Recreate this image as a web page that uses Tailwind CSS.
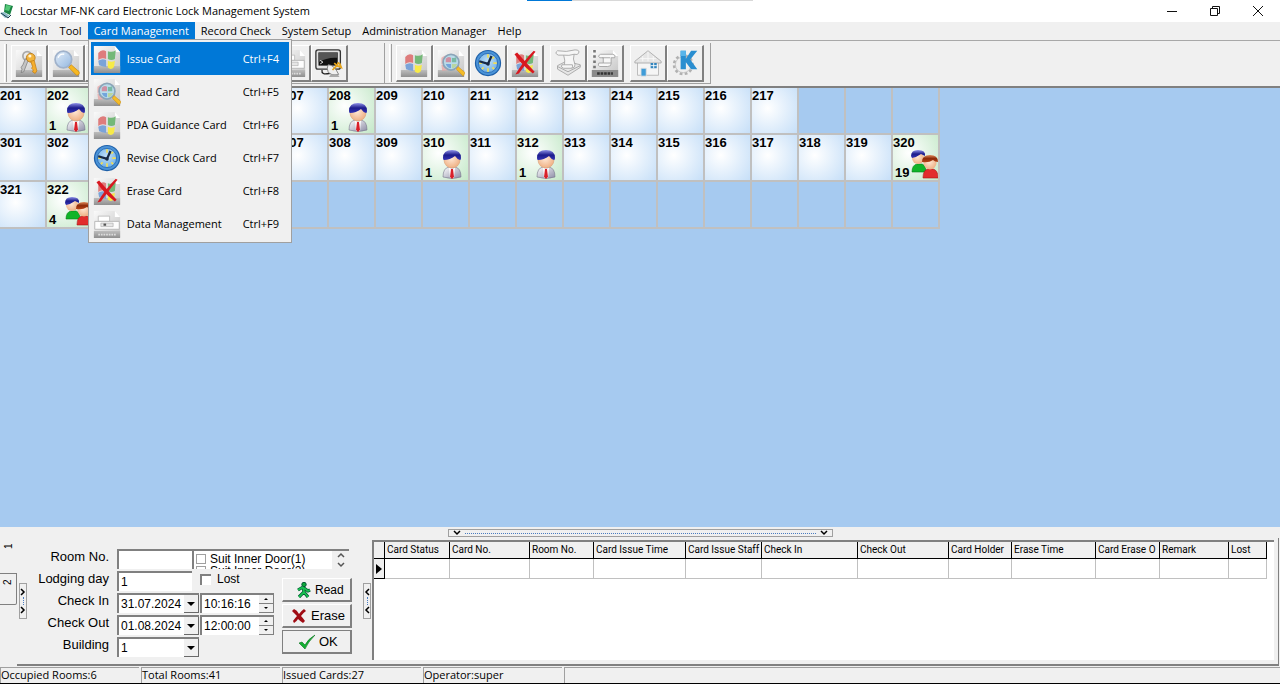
<!DOCTYPE html>
<html lang="en">
<head>
<meta charset="UTF-8">
<meta name="viewport" content="width=device-width, initial-scale=1.0">
<title>Locstar MF-NK card Electronic Lock Management System</title>
<script src="https://cdn.jsdelivr.net/npm/@tailwindcss/browser@4"></script>
</head>
<body class="h-screen flex flex-col overflow-hidden bg-[#f0f0f0] text-black font-['Open_Sans',sans-serif] text-[11px] leading-4">

<!-- icon sprite -->
<svg class="absolute w-0 h-0" aria-hidden="true">
    <defs>
        <linearGradient id="gPage" x1="0" y1="0" x2="1" y2="1"><stop offset="0" stop-color="#fafafa"/><stop offset="1" stop-color="#c4c4c4"/></linearGradient>
        <linearGradient id="gStrip" x1="0" y1="0" x2="0" y2="1"><stop offset="0" stop-color="#bdbdbd"/><stop offset="1" stop-color="#8f8f8f"/></linearGradient>
        <linearGradient id="gHair" x1="0" y1="0" x2="0" y2="1"><stop offset="0" stop-color="#8f92e8"/><stop offset=".5" stop-color="#1c1c8c"/><stop offset="1" stop-color="#3434b4"/></linearGradient>
        <linearGradient id="gHairRed" x1="0" y1="0" x2="0" y2="1"><stop offset="0" stop-color="#e08a5a"/><stop offset=".5" stop-color="#8e2a08"/><stop offset="1" stop-color="#b84418"/></linearGradient>
        <radialGradient id="gFace" cx=".45" cy=".4" r=".6"><stop offset="0" stop-color="#ffe9d6"/><stop offset="1" stop-color="#efb084"/></radialGradient>
        <linearGradient id="gSuit" x1="0" y1="0" x2="1" y2="1"><stop offset="0" stop-color="#ffffff"/><stop offset="1" stop-color="#8d8da6"/></linearGradient>
        <radialGradient id="gDial" cx=".5" cy=".4" r=".6"><stop offset="0" stop-color="#c4e2fa"/><stop offset="1" stop-color="#6fb0e6"/></radialGradient>
        <linearGradient id="gLens" x1="0" y1="0" x2="1" y2="1"><stop offset="0" stop-color="#e3edf8"/><stop offset="1" stop-color="#93b7e0"/></linearGradient>
    </defs>
    <symbol id="page" viewBox="0 0 32 32">
        <path d="M1 1h24l6 7v23H1z" fill="url(#gPage)"/>
        <path d="M25 1v7h6z" fill="#fff"/>
        <path d="M1 24h30v8H1z" fill="url(#gStrip)"/>
    </symbol>
    <symbol id="flag" viewBox="0 0 32 32">
        <use href="#page"/>
        <path d="M6 9q4-5 9-2v9q-5-2-9 1z" fill="#de7c7c"/>
        <path d="M17 7q5 2 9-1l-1 10q-4 2-8 0z" fill="#74b878"/>
        <path d="M6 18q4-3 9-1v8q-5-1-8-2z" fill="#7ba3d8"/>
        <path d="M17 18q4 2 8 0l-1 7q-3 4-7 1z" fill="#f7ea48"/>
    </symbol>
    <symbol id="flag-search" viewBox="0 0 32 32">
        <use href="#page"/>
        <path d="M5 10q5-4 9-2l-1 7-8 2zM5 18l8-1v7l-7 1z" fill="#e6a0a0" opacity=".7"/>
        <circle cx="16" cy="15" r="9" fill="#b9dcea" stroke="#8ba4b8" stroke-width="2"/>
        <path d="M10 11q3-3 6-1v5h-6z" fill="#cf8fa2"/><path d="M17 10q3 1 5-1v6h-5z" fill="#79b9a5"/><path d="M10 17h6v5q-4 0-6-5z" fill="#73a5dc"/><path d="M17 17h6q-2 5-6 5z" fill="#b9d6a0"/>
        <path d="M22 23l2-3 8 7-2 4z" fill="#f4bc28" stroke="#c98c14" stroke-width=".6"/>
    </symbol>
    <symbol id="clock" viewBox="0 0 32 32">
        <circle cx="16" cy="16" r="15" fill="#1d5fa8"/>
        <circle cx="16" cy="16" r="13.6" fill="#4a93d8"/>
        <circle cx="16" cy="16" r="11" fill="url(#gDial)" stroke="#2a6cb4"/>
        <path d="M16 6v4M16 22v4M22 16h4M6 16h3M23 9l-2 2M9 23l2-2M23 23l-2-2" stroke="#f0dc58" stroke-width="2"/>
        <path d="M6 14l10 3 4-9" fill="none" stroke="#172a45" stroke-width="2.6"/>
        <circle cx="16" cy="17" r="2" fill="#172a45"/>
    </symbol>
    <symbol id="erase" viewBox="0 0 32 32">
        <use href="#flag"/>
        <path d="M4 6l3-2q7 8 20 22l-2 2Q13 19 4 6z" fill="#d81820"/>
        <path d="M26 2l2 1Q18 15 9 28l-4 1Q14 14 26 2z" fill="#d81820"/>
    </symbol>
    <symbol id="data" viewBox="0 0 32 32">
        <use href="#page"/>
        <path d="M6 7h13v6H6z" fill="#fff" stroke="#bbb"/>
        <path d="M2 13h28v9H2z" fill="#fdfdfd" stroke="#b4b4b4"/>
        <path d="M9 15h14v4H9z" fill="#e6e6e6" stroke="#aaa" stroke-width=".7"/>
        <path d="M12 15.500h3v2.500h-3z" fill="#555"/>
        <path d="M6 28h20" stroke="#ddd" stroke-width="2" stroke-dasharray="2 1"/>
    </symbol>
    <symbol id="keys" viewBox="0 0 32 32">
        <use href="#page"/>
        <circle cx="14" cy="8" r="5" fill="none" stroke="#a9a9a9" stroke-width="2"/>
        <path d="M12 11l3 2-5 13-3 1 1-4-1-2 2-3z" fill="#c4c4c4" stroke="#777" stroke-width=".8"/>
        <circle cx="18" cy="10" r="5" fill="#f2b43c" stroke="#bc7a16"/>
        <circle cx="17" cy="8" r="1.800" fill="#fff4d8"/>
        <path d="M18 14l4-1 3 12-2 3-3-2 1-2-2-2 1-2z" fill="#f5ae2e" stroke="#bc7a16" stroke-width=".8"/>
    </symbol>
    <symbol id="search" viewBox="0 0 32 32">
        <use href="#page"/>
        <circle cx="13" cy="12" r="9.500" fill="url(#gLens)" stroke="#a0b2cb" stroke-width="2"/>
        <path d="M7 10q2-5 7-4" fill="none" stroke="#fff" stroke-width="1.500"/>
        <path d="M19 21l3-3 9 8q1 4-3 4z" fill="#f6b822" stroke="#c58614" stroke-width=".8"/>
    </symbol>
    <symbol id="monitor" viewBox="0 0 32 32">
        <rect x="1" y="1" width="28" height="22" rx="2.500" fill="#e2e2e2" stroke="#333" stroke-width="1.500"/>
        <path d="M4 4h22v15H4z" fill="#111"/><path d="M4 4h22v6Q14 9 4 15z" fill="#555"/>
        <path d="M6 13l3 2-3 2" fill="none" stroke="#fff"/>
        <path d="M8 24q-1 6 8 4l5-1" fill="none" stroke="#222" stroke-width="1.500"/>
        <path d="M15 18q7 0 12 11-9 2-12-3-2-4 0-8z" fill="#efefef" stroke="#777"/>
        <path d="M20 24l5-5M22 16l3 3 2-4M25 19l5 2-2-5" fill="none" stroke="#e6a51c" stroke-width="2"/>
        <path d="M18 29h8l2 3H16z" fill="#aaa"/>
    </symbol>
    <symbol id="scroll" viewBox="0 0 32 32">
        <path d="M4 19l10-5 16 4v3l-14 9L4 23z" fill="#e6e6e6" stroke="#a5a5a5"/>
        <path d="M4 20l12 6 14-7" fill="none" stroke="#a5a5a5"/>
        <path d="M4 2q10 2 20-1 6 0 4 4-1 2-5 1-2 5 1 12 0 4-4 4H11q-4-1-2-4h3q1-5-1-11H5Q0 5 4 2z" fill="#f6f6f6" stroke="#a5a5a5"/>
        <path d="M12 18h9q1 3-1 4M11 7q6 1 12-1" fill="none" stroke="#a5a5a5"/>
    </symbol>
    <symbol id="assets" viewBox="0 0 32 32">
        <use href="#page"/>
        <path d="M4 1v22" stroke="#777" stroke-width="3" stroke-dasharray="3 3"/>
        <path d="M11 6h14q4 1 2 4h-4v7q0 3-4 3h-9q-3-1-1-4h5V10h-4q-3-2 1-4z" fill="#f8f8f8" stroke="#a0a0a0"/>
        <path d="M13 10h9M14 16h9" stroke="#a0a0a0"/>
        <path d="M1 24h30v8H1z" fill="#8b8b8b"/>
        <path d="M7 28h18" stroke="#333" stroke-width="3" stroke-dasharray="3 1"/>
    </symbol>
    <symbol id="house" viewBox="0 0 32 32">
        <path d="M4 14h24v16H4z" fill="#f5f5f5" stroke="#b5b5b5"/>
        <path d="M16 2L1 14v2h30v-2z" fill="#e5e5e5" stroke="#a9a9a9"/>
        <path d="M16 3v11M10 8v6M22 8v6M7 11h18" stroke="#fafafa"/>
        <path d="M8 22h6v9H8z" fill="#3f9cd8" stroke="#e0e0e0"/>
        <path d="M19 16h7v6h-7z" fill="#3385bd"/><path d="M22.500 16v6M19 19h7" stroke="#fff"/>
    </symbol>
    <symbol id="kgear" viewBox="0 0 32 32">
        <circle cx="14" cy="18" r="10" fill="#e9e9e9" stroke="#b0b0b0" stroke-width="4" stroke-dasharray="3 2.500"/>
        <circle cx="14" cy="18" r="9" fill="#efefef" stroke="#c5c5c5"/>
        <path d="M11 2h6v9l6-9h7l-8 10 8 11h-7l-6-8v8h-6z" fill="#2a8ed0"/>
        <path d="M11 2h6v6h-6z" fill="#58b4ea"/>
    </symbol>
    <symbol id="guest" viewBox="0 0 20 30">
        <path d="M1 28q0-9 6-10h6q6 1 6 10-9 3-18 0z" fill="url(#gSuit)" stroke="#77778c" stroke-width=".6"/>
        <path d="M7 18l3 3 3-3-1 11H8z" fill="#fff"/>
        <path d="M9 20h2l1 8-2 2-2-2z" fill="#d8202a"/>
        <ellipse cx="10" cy="11" rx="8" ry="8" fill="url(#gFace)" stroke="#d79a70" stroke-width=".5"/>
        <path d="M1 9Q1 1 10 1t9 8q0 2-1 2Q15 10 13 7 8 11 2 11q-1 0-1-2z" fill="url(#gHair)"/>
    </symbol>
    <symbol id="couple" viewBox="0 0 28 30">
        <path d="M2 23q0-7 5-8h5q4 1 4 8z" fill="#10b428" stroke="#08801a" stroke-width=".6"/>
        <circle cx="8" cy="9" r="6" fill="url(#gFace)"/>
        <path d="M1 7q0-6 7-6 8 0 7 6l-4-2Q7 8 2 9z" fill="url(#gHair)"/>
        <path d="M13 29q0-8 5-9h5q5 1 5 9z" fill="#e22c2c" stroke="#a81414" stroke-width=".6"/>
        <circle cx="20" cy="14" r="6.500" fill="url(#gFace)"/>
        <path d="M12 13q0-7 8-7t8 7q-3 0-5-2-4 3-11 2z" fill="url(#gHairRed)"/>
    </symbol>
</svg>

<!-- title bar -->
<header class="relative flex items-center h-[22px] shrink-0 bg-white">
    <div class="absolute top-0 left-[527px] w-[45px] h-px bg-[#0078d7]"></div>
    <div class="absolute top-0 left-[572px] w-[181px] h-px bg-[#d8d8d8]"></div>
    <svg class="w-3.5 h-4 mr-1.5" viewBox="0 0 14 16"><path d="M5 1l8 2-3 9-6-3z" fill="#1a8444"/><path d="M6 2l5 1-2 5-4-1z" fill="#54c878"/><path d="M0 10l4-1 6 4-5 2z" fill="#8fbcc8"/><path d="M1 10l7 5 3-3" fill="none" stroke="#1b3c50"/></svg>
    <h1 class="flex-1 text-[11px]">Locstar MF-NK card Electronic Lock Management System</h1>
    <button class="w-[42px] h-5 grid place-items-center" aria-label="Minimize"><svg class="w-2.5 h-2.5" viewBox="0 0 10 10" stroke="#111"><path d="M0 5.500h10"/></svg></button>
    <button class="w-[43px] h-5 grid place-items-center" aria-label="Restore"><svg class="w-2.5 h-2.5" viewBox="0 0 10 10" fill="none" stroke="#111"><path d="M.5 2.500h7v7h-7zM2.500 2.500v-2h7v7h-2"/></svg></button>
    <button class="w-[44px] h-5 grid place-items-center" aria-label="Close"><svg class="w-2.5 h-2.5" viewBox="0 0 10 10" stroke="#111"><path d="M0 0l10 10M10 0L0 10"/></svg></button>
</header>

<!-- menu bar -->
<nav class="flex h-[19px] shrink-0 border-b border-[#a8a8a8]">
    <button class="pl-1 pr-1.5">Check In</button>
    <button class="px-1.5">Tool</button>
    <div class="relative">
        <button class="h-[18px] px-1.5 bg-[#0078d7] text-white">Card Management</button>
        <div class="absolute z-10 left-0 top-[17px] w-[204px] p-0.5 bg-[#f0f0f0] border border-[#a0a0a0]" role="menu">
            <button role="menuitem" class="flex items-center w-full h-[33px] pl-0.5 pr-2 bg-[#0078d7] text-white"><svg class="w-7 h-7 mr-1.5"><use href="#flag"/></svg>Issue Card<span class="ml-auto w-[38px] text-left">Ctrl+F4</span></button>
            <button role="menuitem" class="flex items-center w-full h-[33px] pl-0.5 pr-2"><svg class="w-7 h-7 mr-1.5"><use href="#flag-search"/></svg>Read Card<span class="ml-auto w-[38px] text-left">Ctrl+F5</span></button>
            <button role="menuitem" class="flex items-center w-full h-[33px] pl-0.5 pr-2"><svg class="w-7 h-7 mr-1.5"><use href="#flag"/></svg>PDA Guidance Card<span class="ml-auto w-[38px] text-left">Ctrl+F6</span></button>
            <button role="menuitem" class="flex items-center w-full h-[33px] pl-0.5 pr-2"><svg class="w-7 h-7 mr-1.5"><use href="#clock"/></svg>Revise Clock Card<span class="ml-auto w-[38px] text-left">Ctrl+F7</span></button>
            <button role="menuitem" class="flex items-center w-full h-[33px] pl-0.5 pr-2"><svg class="w-7 h-7 mr-1.5"><use href="#erase"/></svg>Erase Card<span class="ml-auto w-[38px] text-left">Ctrl+F8</span></button>
            <button role="menuitem" class="flex items-center w-full h-[33px] pl-0.5 pr-2"><svg class="w-7 h-7 mr-1.5"><use href="#data"/></svg>Data Management<span class="ml-auto w-[38px] text-left">Ctrl+F9</span></button>
        </div>
    </div>
    <button class="pl-1.5 pr-[5px]">Record Check</button>
    <button class="pl-1.5 pr-[5px]">System Setup</button>
    <button class="pl-1.5 pr-[5px]">Administration Manager</button>
    <button class="pl-1.5 pr-[5px]">Help</button>
</nav>

<!-- toolbar, filled by the script below -->
<div class="flex h-[47px] shrink-0 pt-0.5 pb-0.5 border-b-2 border-[#808080] bg-[#f0f0f0]">
    <div class="flex items-center w-[385px] pl-1 border-r border-b border-[#a0a0a0]">
        <div class="w-[3px] h-[38px] mr-1 border-l border-r border-l-white border-r-[#a0a0a0]"></div>
        <div id="toolsLeft" class="flex"></div>
    </div>
    <div class="flex items-center w-[326px] pl-1 border-r border-b border-[#a0a0a0]">
        <div class="w-[3px] h-[38px] mr-1 border-l border-r border-l-white border-r-[#a0a0a0]"></div>
        <div id="toolsRight" class="flex"></div>
    </div>
</div>

<!-- room board -->
<main class="flex-1 min-h-0 bg-[#a6caf0] overflow-hidden">
    <div id="rooms" class="grid grid-cols-[repeat(20,47px)] auto-rows-[47px] w-max font-['Liberation_Sans',sans-serif] text-[13px] leading-[13px] font-bold"></div>
</main>

<!-- splitter -->
<div class="flex justify-center h-[11px] shrink-0 pt-0.5">
    <button class="flex items-center w-[385px] h-2 px-1 border border-[#a0a0a0]" aria-label="Collapse panel">
        <svg class="w-2 h-1.5" viewBox="0 0 8 6" fill="none" stroke="#000" stroke-width="1.500"><path d="M1 1l3 3 3-3"/></svg>
        <span class="flex-1 mx-1 border-t border-dotted border-[#4a7cc0]"></span>
        <svg class="w-2 h-1.5" viewBox="0 0 8 6" fill="none" stroke="#000" stroke-width="1.500"><path d="M1 1l3 3 3-3"/></svg>
    </button>
</div>

<!-- bottom panel -->
<section class="flex h-[128px] shrink-0 pr-px">
    <div class="flex flex-col w-[17px] items-center text-[10px] leading-4 font-['Liberation_Sans',sans-serif]">
        <button class="w-full h-[35px] flex justify-center"><span class="[writing-mode:vertical-rl] rotate-180 h-4">1</span></button>
        <button class="w-full h-8 flex justify-center border-t border-r border-b border-[#808080] rounded-br-xs"><span class="[writing-mode:vertical-rl] rotate-180 h-4">2</span></button>
    </div>
    <div class="flex flex-1 min-w-0 border-b-2 border-r border-[#808080]">
        <button class="flex flex-col items-center justify-between self-start w-2 h-9 mt-[45px] ml-0.5 py-1 shrink-0 border border-[#a0a0a0]" aria-label="Hide form">
            <svg class="w-1.5 h-2 shrink-0" viewBox="0 0 6 8" fill="none" stroke="#000" stroke-width="1.500"><path d="M1 1l3 3-3 3"/></svg>
            <span class="h-2 border-l border-dotted border-[#4a7cc0]"></span>
            <svg class="w-1.5 h-2 shrink-0" viewBox="0 0 6 8" fill="none" stroke="#000" stroke-width="1.500"><path d="M1 1l3 3-3 3"/></svg>
        </button>

        <form class="flex shrink-0 w-[342px] pl-1.5 pt-[11px] font-['Liberation_Sans',sans-serif] text-[13px] leading-4">
            <div class="grid grid-cols-[76px_75px_82px] auto-rows-[21px] gap-x-2 gap-y-px content-start text-xs">
                <label for="roomNo" class="text-right text-[13px] leading-4">Room No.</label>
                <input id="roomNo" type="text" class="h-5 w-full bg-white border-t-2 border-l-2 border-[#808080] px-0.5">
                <div class="flex w-[157px] h-5 -ml-2 overflow-hidden border-t-2 border-l-2 border-[#808080] bg-white">
                    <div class="flex-1 h-[18px] overflow-hidden">
                        <label class="flex items-center h-[14px] mt-px pl-0.5 gap-1"><input type="checkbox" class="appearance-none w-2.5 h-2.5 border border-[#a0a0a0] bg-white">Suit Inner Door(1)</label>
                        <label class="flex items-center h-2.5 pl-0.5 gap-1"><input type="checkbox" class="appearance-none w-2.5 h-2.5 border border-[#a0a0a0] bg-white">Suit Inner Door(2)</label>
                    </div>
                    <button type="button" class="w-[17px] bg-[#f0f0f0] grid place-items-center" aria-label="Scroll"><svg class="w-2 h-4" viewBox="0 0 8 16" fill="none" stroke="#555" stroke-width="1.500"><path d="M1 5l3-3 3 3M1 11l3 3 3-3"/></svg></button>
                </div>

                <label for="days" class="text-right text-[13px] leading-4">Lodging day</label>
                <input id="days" type="text" value="1" class="h-5 w-full bg-white border-t-2 border-l-2 border-[#808080] px-0.5">
                <label class="flex items-center h-4 gap-1.5"><input type="checkbox" class="appearance-none w-[11px] h-[11px] bg-white border-t-2 border-l-2 border-[#808080]">Lost</label>

                <label for="inDate" class="text-right text-[13px] leading-4">Check In</label>
                <div class="flex w-[82px] h-5 bg-white border-t-2 border-l-2 border-[#808080]">
                    <input id="inDate" type="text" value="31.07.2024" class="w-[65px] pl-0.5 min-w-0">
                    <button type="button" class="w-[15px] bg-[#f0f0f0] border-r border-b border-[#696969] grid place-items-center" aria-label="Pick check in date"><svg class="w-2 h-1" viewBox="0 0 8 4"><path d="M0 0h8L4 4z"/></svg></button>
                </div>
                <div class="flex w-[74px] h-5 bg-white border-t-2 border-l-2 border-[#808080]">
                    <input aria-label="Check in time" type="text" value="10:16:16" class="w-[57px] pl-0.5 min-w-0">
                    <div class="flex flex-col w-[15px] bg-[#f0f0f0]">
                        <button type="button" class="h-[9px] grid place-items-center border-b border-r border-[#808080]" aria-label="Later"><svg class="w-1 h-0.5" viewBox="0 0 4 2"><path d="M0 2h4L2 0z"/></svg></button>
                        <button type="button" class="h-[9px] grid place-items-center border-b border-r border-[#808080]" aria-label="Earlier"><svg class="w-1 h-0.5" viewBox="0 0 4 2"><path d="M0 0h4L2 2z"/></svg></button>
                    </div>
                </div>

                <label for="outDate" class="text-right text-[13px] leading-4">Check Out</label>
                <div class="flex w-[82px] h-5 bg-white border-t-2 border-l-2 border-[#808080]">
                    <input id="outDate" type="text" value="01.08.2024" class="w-[65px] pl-0.5 min-w-0">
                    <button type="button" class="w-[15px] bg-[#f0f0f0] border-r border-b border-[#696969] grid place-items-center" aria-label="Pick check out date"><svg class="w-2 h-1" viewBox="0 0 8 4"><path d="M0 0h8L4 4z"/></svg></button>
                </div>
                <div class="flex w-[74px] h-5 bg-white border-t-2 border-l-2 border-[#808080]">
                    <input aria-label="Check out time" type="text" value="12:00:00" class="w-[57px] pl-0.5 min-w-0">
                    <div class="flex flex-col w-[15px] bg-[#f0f0f0]">
                        <button type="button" class="h-[9px] grid place-items-center border-b border-r border-[#808080]" aria-label="Later"><svg class="w-1 h-0.5" viewBox="0 0 4 2"><path d="M0 2h4L2 0z"/></svg></button>
                        <button type="button" class="h-[9px] grid place-items-center border-b border-r border-[#808080]" aria-label="Earlier"><svg class="w-1 h-0.5" viewBox="0 0 4 2"><path d="M0 0h4L2 2z"/></svg></button>
                    </div>
                </div>

                <label for="building" class="text-right text-[13px] leading-4">Building</label>
                <div class="relative w-[82px] h-5 bg-white border-t-2 border-l-2 border-[#808080]">
                    <select id="building" class="appearance-none w-full h-full pl-0.5"><option>1</option></select>
                    <div class="absolute right-0 inset-y-0 w-[15px] bg-[#f0f0f0] border-r border-b border-[#696969] grid place-items-center pointer-events-none"><svg class="w-2 h-1" viewBox="0 0 8 4"><path d="M0 0h8L4 4z"/></svg></div>
                </div>
            </div>
            <div class="flex flex-col gap-0.5 pt-[29px]">
                <button type="button" class="flex items-center gap-1 w-[70px] h-6 pl-3 text-xs border-r-2 border-b-2 border-t border-l border-t-white border-l-white border-r-[#808080] border-b-[#808080]"><svg class="w-4 h-4" viewBox="0 0 16 16"><circle cx="9" cy="2.500" r="2.200" fill="#0ca838" stroke="#053"/><path d="M8 5L3 8M8 5l1 5-5 5M9 10l4 5M9 6l4 3 2-1" fill="none" stroke="#053" stroke-width="3.200"/><path d="M8 5L3 8M8 5l1 5-5 5M9 10l4 5M9 6l4 3 2-1" fill="none" stroke="#18c050" stroke-width="1.800"/></svg>Read</button>
                <button type="button" class="flex items-center gap-1 w-[70px] h-6 pl-2 border-r-2 border-b-2 border-t border-l border-t-white border-l-white border-r-[#808080] border-b-[#808080]"><svg class="w-4 h-4" viewBox="0 0 16 16"><path d="M3 1q3 1 5 5 2-3 5-5l2 2q-3 2-5 5 2 2 4 5l-2 2q-3-2-5-4-1 2-4 4l-1-2q2-3 4-5-3-3-5-5z" fill="#a00c14"/></svg>Erase</button>
                <button type="button" class="flex items-center gap-1 w-[70px] h-6 pl-4 border-r-2 border-b-2 border-t border-l border-[#808080]"><svg class="w-4 h-4" viewBox="0 0 16 16"><path d="M0 9l3-1 3 3q3-6 10-10Q9 8 6 15z" fill="#12b030" stroke="#08701c" stroke-width=".6"/></svg>OK</button>
            </div>
        </form>

        <button class="flex flex-col items-center justify-between self-start w-2 h-9 mt-[45px] -ml-1.5 py-1 mr-px shrink-0 border border-[#a0a0a0]" aria-label="Hide table">
            <svg class="w-1.5 h-2 shrink-0" viewBox="0 0 6 8" fill="none" stroke="#000" stroke-width="1.500"><path d="M5 1L2 4l3 3"/></svg>
            <span class="h-2 border-l border-dotted border-[#4a7cc0]"></span>
            <svg class="w-1.5 h-2 shrink-0" viewBox="0 0 6 8" fill="none" stroke="#000" stroke-width="1.500"><path d="M5 1L2 4l3 3"/></svg>
        </button>

        <div class="flex-1 min-w-0 mt-0.5 mb-1 mr-1 overflow-hidden bg-white border-t-2 border-l-2 border-[#808080]">
            <table class="table-fixed border-separate border-spacing-0 w-[893px] font-[Roboto,sans-serif] text-[10px] leading-4 whitespace-nowrap">
                <colgroup><col class="w-[11px]"><col class="w-[65px]"><col class="w-[80px]"><col class="w-[64px]"><col class="w-[92px]"><col class="w-[76px]"><col class="w-[96px]"><col class="w-[91px]"><col class="w-[63px]"><col class="w-[84px]"><col class="w-[64px]"><col class="w-[69px]"><col class="w-[38px]"></colgroup>
                <thead>
                    <tr class="h-[17px] bg-[#f0f0f0] text-left [&>th]:font-normal [&>th]:p-0 [&>th]:pl-0.5 [&>th]:overflow-hidden [&>th]:border-r [&>th]:border-b [&>th]:border-black">
                        <th></th><th>Card Status</th><th>Card No.</th><th>Room No.</th><th>Card Issue Time</th><th>Card Issue Staff</th><th>Check In</th><th>Check Out</th><th>Card Holder</th><th>Erase Time</th><th>Card Erase O</th><th>Remark</th><th>Lost</th>
                    </tr>
                </thead>
                <tbody>
                    <tr class="h-5 [&>td]:p-0 [&>td]:border-r [&>td]:border-b [&>td]:border-[#c0c0c0]">
                        <td class="bg-[#f0f0f0] border-black!"><svg class="w-1.5 h-2.5 ml-0.5" viewBox="0 0 6 10"><path d="M0 0l6 5-6 5z"/></svg></td><td></td><td></td><td></td><td></td><td></td><td></td><td></td><td></td><td></td><td></td><td></td><td></td>
                    </tr>
                </tbody>
            </table>
        </div>
    </div>
</section>

<!-- status bar -->
<footer class="flex h-[18px] shrink-0 pt-px border-b border-black gap-0.5 leading-[14px] [&>div]:border-t [&>div]:border-l [&>div]:border-[#a0a0a0]">
    <div class="w-[139px]">Occupied Rooms:6</div>
    <div class="w-[139px]">Total Rooms:41</div>
    <div class="w-[139px]">Issued Cards:27</div>
    <div class="w-[139px]">Operator:super</div>
    <div class="flex-1"></div>
</footer>

<script>
const toolsLeft = ['keys', 'search', 'page', 'page', '', 'page', 'page', 'page', 'data', 'monitor'];
const toolsRight = ['flag', 'flag-search', 'clock', 'erase', '', 'scroll', 'assets', '', 'house', 'kgear'];

// empty name = gap between button groups
function renderTools(id, names, gapClass) {
    document.getElementById(id).innerHTML = names.map(name => name === ''
        ? `<span class="${gapClass}"></span>`
        : `<button aria-label="${name}" class="grid place-items-center w-[37px] h-[37px] border-t border-l border-r-2 border-b-2 border-t-white border-l-white border-r-[#808080] border-b-[#808080]"><svg class="w-7 h-7"><use href="#${name}"/></svg></button>`
    ).join('');
}
renderTools('toolsLeft', toolsLeft, 'w-1');
renderTools('toolsRight', toolsRight, 'w-1.5');

// room number -> guests staying
const guests = { 202: 1, 208: 1, 310: 1, 312: 1, 320: 19, 322: 4 };
const rows = [[201, 217], [301, 320], [321, 322]];
let html = '';
rows.forEach(([first, last]) => {
    for (let i = 0; i < 20; i++) {
        const room = first + i;
        if (room > last) {
            html += '<div class="border-r-2 border-b-2 border-[#c0c0c0]"></div>';
        } else if (guests[room]) {
            const icon = guests[room] > 1
                ? '<svg class="w-7 h-[30px] shrink-0"><use href="#couple"/></svg>'
                : '<svg class="w-5 h-[30px] mr-1.5 shrink-0"><use href="#guest"/></svg>';
            html += `<div class="flex flex-col justify-between pt-px border-r-2 border-b-2 border-[#c0c0c0] bg-[radial-gradient(circle_at_35%_40%,#ffffff,#c4e8c8)]"><span class="h-3">${room}</span><div class="flex items-end justify-between pl-0.5 pb-px"><span class="w-3.5">${guests[room]}</span>${icon}</div></div>`;
        } else {
            html += `<div class="pt-px border-r-2 border-b-2 border-[#c0c0c0] bg-[radial-gradient(circle_at_35%_45%,#ffffff,#c6dff8)]">${room}</div>`;
        }
    }
});
document.getElementById('rooms').innerHTML = html;
</script>
</body>
</html>
